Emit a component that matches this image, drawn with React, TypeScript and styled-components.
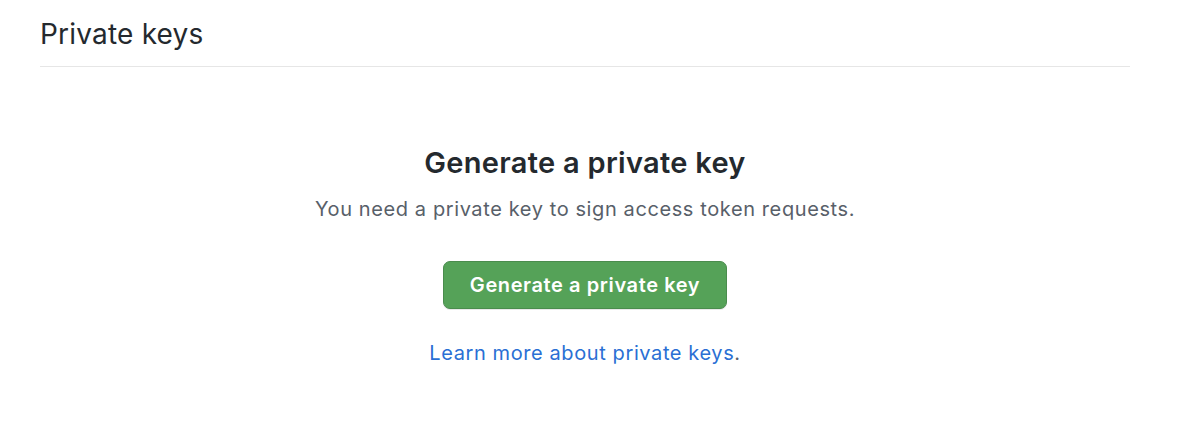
import styled, { createGlobalStyle } from 'styled-components';

const GlobalStyle = createGlobalStyle`
    body {
        margin: 0;
        background: #ffffff;
        font-family: Inter, "Liberation Sans", sans-serif;
        color: #24292e;
    }
`;

const Page = styled.div`
    padding: 0 56px 0 40px;
    width: 1090px;
`;

const Subhead = styled.div`
    display: flex;
    align-items: center;
    height: 66px;
    border-bottom: 1px solid #e6e6e6;
`;

const SubheadTitle = styled.h2`
    margin: 0;
    padding-top: 2px;
    font-size: 28px;
    font-weight: 400;
    letter-spacing: 0.2px;
    color: #24292e;
`;

const Blankslate = styled.div`
    display: flex;
    flex-flow: column;
    align-items: center;
    padding-top: 76px;
`;

const Heading = styled.h3`
    margin: 0;
    font-size: 29px;
    font-weight: 600;
    line-height: 40px;
    letter-spacing: 0.3px;
`;

const Lead = styled.p`
    margin: 12px 0 0;
    font-size: 20px;
    line-height: 28px;
    letter-spacing: 0.6px;
    color: #586069;
`;

const PrimaryButton = styled.button`
    margin-top: 38px;
    width: 284px;
    height: 48px;
    border: 1px solid #4a8c4d;
    border-radius: 7px;
    background-color: #55a258;
    box-shadow: 0 1px 0 rgba(27, 31, 35, 0.1);
    color: #ffffff;
    font-family: Inter, "Liberation Sans", sans-serif;
    font-size: 20px;
    font-weight: 600;
    letter-spacing: 0.6px;
    cursor: pointer;
`;

const LinkLine = styled.p`
    margin: 30px 0 0;
    font-size: 20px;
    line-height: 28px;
    letter-spacing: 0.6px;
    color: #586069;
`;

const Link = styled.a`
    color: #2a6fd4;
    text-decoration: none;
`;

const App = () => (
    <>
        <GlobalStyle />
        <Page>
            <Subhead>
                <SubheadTitle>Private keys</SubheadTitle>
            </Subhead>
            <Blankslate>
                <Heading>Generate a private key</Heading>
                <Lead>You need a private key to sign access token requests.</Lead>
                <PrimaryButton type="button">Generate a private key</PrimaryButton>
                <LinkLine>
                    <Link href="#">Learn more about private keys</Link>.
                </LinkLine>
            </Blankslate>
        </Page>
    </>
);

export default App;
